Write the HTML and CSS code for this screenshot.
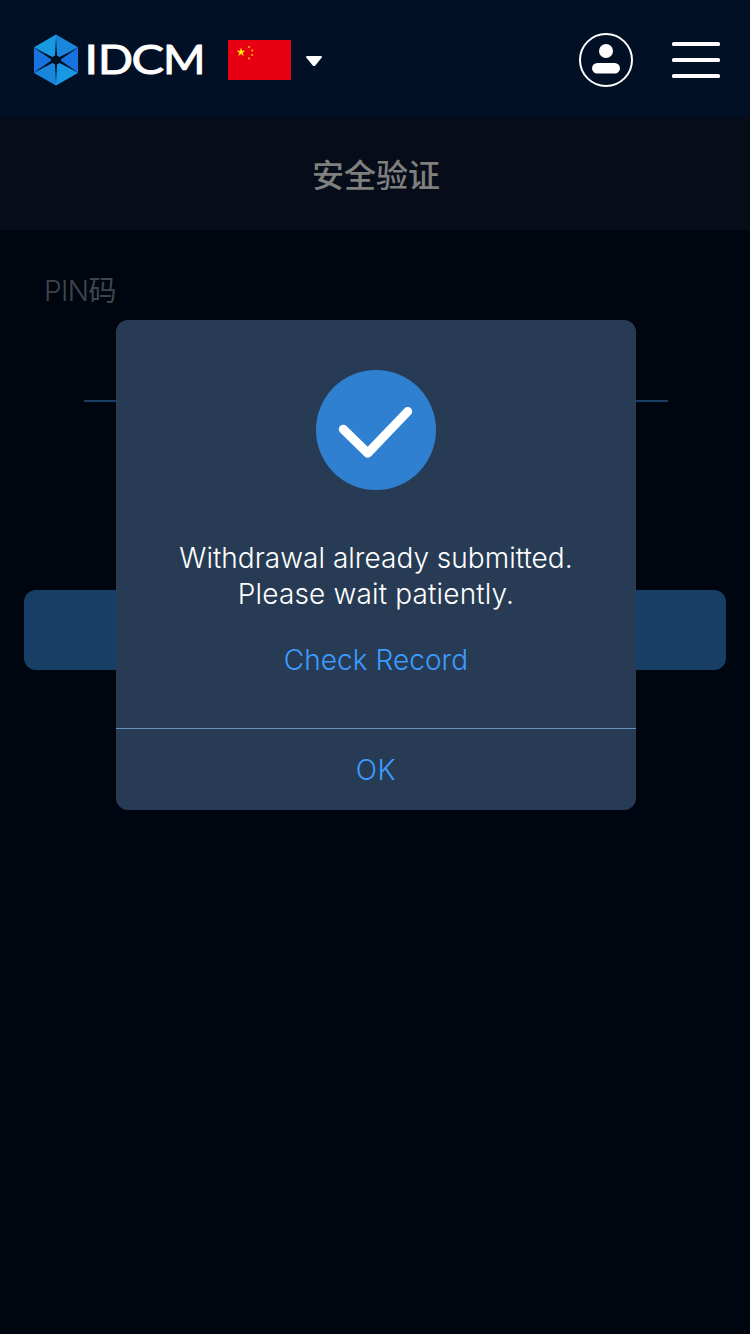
FILE: index.html
```html
<!DOCTYPE html>
<html lang="zh-CN">
<head>
<meta charset="utf-8">
<title>IDCM</title>
<link rel="stylesheet" href="styles.css">
</head>
<body>
<div class="screen">
  <header class="topbar">
    <svg class="logo" width="172" height="54" viewBox="0 0 172 54" role="img" aria-label="IDCM">
      <path fill="#1799e2" d="M24 1.500V27L2 14.200z"/>
      <path fill="#1985db" d="M24 1.500V27l22-12.800z"/>
      <path fill="#1673df" d="M46 14.200V40L24 27z"/>
      <path fill="#1798e3" d="M46 40L24 52.500V27z"/>
      <path fill="#1985db" d="M24 52.500L2 40l22-13z"/>
      <path fill="#1673df" d="M2 40V14.200L24 27z"/>
      <path fill="#021026" d="M24 4l1 18.500 2.500 1.400L46 14.700 29 26.300v1.400L46 39.500l-18.500-9.400-2.500 1.400L24 50l-1-18.500-2.500-1.400L2 39.500l17-11.800v-1.400L2 14.700l18.500 9.200 2.500-1.400z"/>
      <g class="wordmark">
        <text x="52.400" y="41.200" textLength="13.500" lengthAdjust="spacingAndGlyphs">I</text>
        <text x="66" y="41.200" textLength="35" lengthAdjust="spacingAndGlyphs">D</text>
        <text x="99.600" y="41.200" textLength="32.500" lengthAdjust="spacingAndGlyphs">C</text>
        <text x="131" y="41.200" textLength="42.500" lengthAdjust="spacingAndGlyphs">M</text>
      </g>
    </svg>
    <svg class="flag" width="63" height="40" viewBox="0 0 63 40">
      <path fill="#e70012" d="M0 0h63v40H0z"/>
      <path fill="#ffec00" d="M13 7.600l1.050 3.200h3.350l-2.700 2 1 3.200-2.700-2-2.700 2 1-3.200-2.700-2h3.350z"/>
      <g fill="#f8b400"><circle cx="21" cy="7" r="1.100"/><circle cx="24.200" cy="10.500" r="1.100"/><circle cx="24.200" cy="15" r="1.100"/><circle cx="21" cy="18.500" r="1.100"/></g>
    </svg>
    <svg class="caret" width="16" height="11" viewBox="0 0 16 11"><path fill="#fff" d="M1 0h14q1 0 1 1.300L9.500 9.200Q8 11 6.500 9.200L0 1.300Q0 0 1 0z"/></svg>
    <svg class="user" width="54" height="54" viewBox="0 0 54 54">
      <circle cx="27" cy="27" r="26" fill="none" stroke="#fff" stroke-width="2"/>
      <circle cx="27" cy="18" r="7" fill="#fff"/>
      <rect x="13" y="30" width="28" height="10.500" rx="5.250" fill="#fff"/>
    </svg>
    <svg class="menu" width="48" height="36" viewBox="0 0 48 36" fill="#fff"><rect width="48" height="4" rx="1.500"/><rect y="16" width="48" height="4" rx="1.500"/><rect y="32" width="48" height="4" rx="1.500"/></svg>
  </header>
  <h1 class="title">安全验证</h1>
  <main class="form">
    <div class="label">PIN<span class="label-cjk">码</span></div>
    <div class="pin-line"></div>
    <div class="submit"></div>
  </main>
  <section class="dialog" role="dialog">
    <div class="dialog-body">
      <svg class="check" width="120" height="120" viewBox="0 0 120 120">
        <circle cx="60" cy="60" r="60" fill="#2f80d1"/>
        <path d="M27.300 59.200L51.800 83.200 91.700 41.500" fill="none" stroke="#fff" stroke-width="9" stroke-linecap="round" stroke-linejoin="round"/>
      </svg>
      <p class="message"><span class="line-one">Withdrawal already submitted.</span><br><span class="line-two">Please wait patiently.</span></p>
      <a class="record">Check Record</a>
    </div>
    <div class="ok">OK</div>
  </section>
</div>
</body>
</html>
```
FILE: styles.css
```css
body { margin: 0; background: #000610; font-family: Inter, "Noto Sans CJK SC", sans-serif; font-weight: 300; }
.screen { position: relative; height: 1334px; overflow: hidden; }
.topbar { box-sizing: border-box; height: 117px; padding: 0 30px 0 32px; display: flex; align-items: flex-start; background: #021026; }
.logo { margin-top: 33px; overflow: visible; }
.wordmark { font-family: Lato, sans-serif; font-weight: 400; font-size: 41px; fill: #fff; stroke: #fff; stroke-width: 1px; }
.flag { margin: 40px 0 0 24px; }
.caret { margin: 56px 0 0 15px; }
.user { margin: 33px 0 0 auto; }
.menu { margin: 42px 0 0 39px; }
.title { box-sizing: border-box; height: 113px; margin: 0; padding: 0 0 2px 2px; display: flex; align-items: center; justify-content: center; background: #070d18; color: #7f7f7f; font-family: "Noto Sans CJK SC", sans-serif; font-size: 32px; font-weight: 500; }
.form { padding: 41px 24px 0; }
.label { height: 40px; margin-left: 20px; line-height: 40px; font-size: 28px; color: #40454b; letter-spacing: -.6px; }
.label-cjk { font-weight: 400; }
.pin-line { height: 2px; margin: 89px 58px 0 60px; background: #173f66; }
.submit { height: 80px; margin-top: 188px; border-radius: 12px; background: #173f66; }
.dialog { position: absolute; left: 116px; top: 320px; width: 520px; height: 490px; border-radius: 12px; background: #273c54; overflow: hidden; }
.dialog-body { box-sizing: border-box; height: 408px; padding-top: 50px; display: flex; flex-direction: column; align-items: center; }
.message { margin: 50px 0 0; text-align: center; color: #fff; font-size: 28px; line-height: 36px; white-space: nowrap; }
.line-one { letter-spacing: .02px; }
.line-two { letter-spacing: .16px; }
.record { margin-top: 30px; color: #3d9aff; font-size: 28px; line-height: 36px; letter-spacing: .05px; }
.ok { box-sizing: border-box; height: 82px; border-top: 1px solid #698fbf; padding-top: 1px; line-height: 80px; text-align: center; color: #3d9aff; font-size: 28px; letter-spacing: .5px; }
```
